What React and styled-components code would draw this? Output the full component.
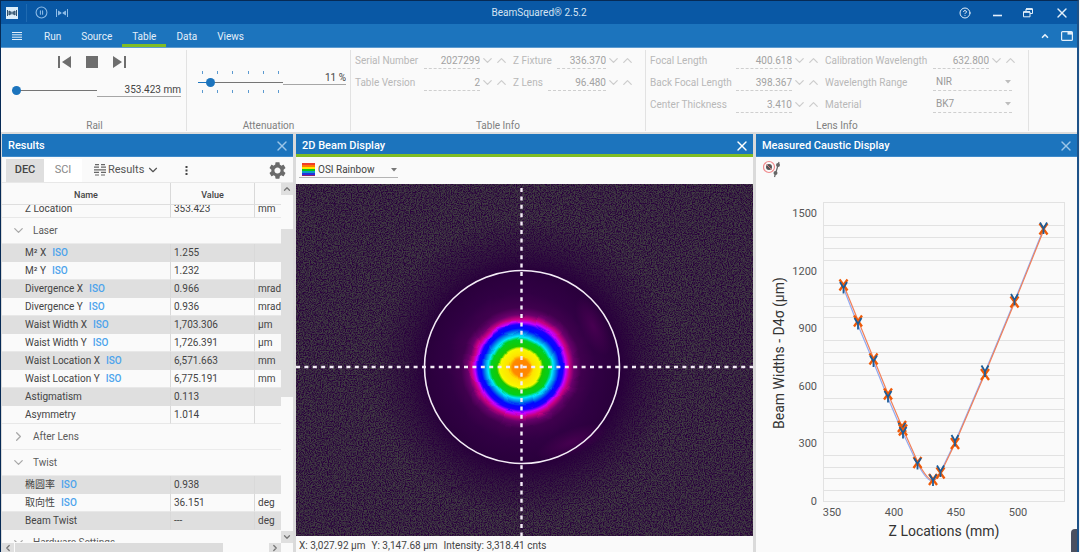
import React, { useEffect, useRef } from 'react'
import styled, { createGlobalStyle, css } from 'styled-components'
import { ChevronDown, ChevronLeft, ChevronRight, ChevronUp, CircleHelp, CirclePause, X } from 'lucide-react'

const GlobalStyle = createGlobalStyle`
* { box-sizing: border-box; }
body {
  margin: 0;
  background: #f4f4f4;
  color: #444;
  font-family: Roboto, "Noto Sans CJK SC", sans-serif;
  font-size: 10px;
  line-height: 14px;
}
button, input, select {
  margin: 0;
  padding: 0;
  border: 0;
  border-radius: 0;
  background: none;
  color: inherit;
  font: inherit;
  outline: none;
}
svg { display: block; flex: none; }
`

const tabs = ['Run', 'Source', 'Table', 'Data', 'Views']

const results = [
  { name: 'Z Location', value: '353.423', unit: 'mm' },
  { group: 'Laser', open: true },
  { name: 'M² X', iso: true, value: '1.255', shade: true },
  { name: 'M² Y', iso: true, value: '1.232' },
  { name: 'Divergence X', iso: true, value: '0.966', unit: 'mrad', shade: true },
  { name: 'Divergence Y', iso: true, value: '0.936', unit: 'mrad' },
  { name: 'Waist Width X', iso: true, value: '1,703.306', unit: 'µm', shade: true },
  { name: 'Waist Width Y', iso: true, value: '1,726.391', unit: 'µm' },
  { name: 'Waist Location X', iso: true, value: '6,571.663', unit: 'mm', shade: true },
  { name: 'Waist Location Y', iso: true, value: '6,775.191', unit: 'mm' },
  { name: 'Astigmatism', value: '0.113', shade: true },
  { name: 'Asymmetry', value: '1.014' },
  { group: 'After Lens', open: false },
  { group: 'Twist', open: true },
  { name: '椭圆率', iso: true, value: '0.938', shade: true },
  { name: '取向性', iso: true, value: '36.151', unit: 'deg' },
  { name: 'Beam Twist', value: '---', unit: 'deg', shade: true },
  { group: 'Hardware Settings', open: true },
]

function NumberField({ label, labelWidth, value }) {
  return (
    <Field>
      <FieldLabel $width={labelWidth}>
        <span>{label}</span>
        <NumberInput defaultValue={value} />
      </FieldLabel>
      <SpinButton aria-label={`Decrease ${label}`}><ChevronDown size={15} strokeWidth={2} /></SpinButton>
      <SpinButton aria-label={`Increase ${label}`}><ChevronUp size={15} strokeWidth={2} /></SpinButton>
    </Field>
  )
}

function SelectField({ label, labelWidth, value }) {
  return (
    <Field>
      <FieldLabel $width={labelWidth}>
        <span>{label}</span>
        <SelectBox $dotted>
          <select defaultValue={value}><option>{value}</option></select>
          <Caret />
        </SelectBox>
      </FieldLabel>
    </Field>
  )
}

function Caret() {
  return <svg width="6" height="4" viewBox="0 0 6 4"><path d="M0 0h6L3 3.5z" fill="currentColor" /></svg>
}

function TitleBar() {
  return (
    <Title>
      <TitleTools>
        <svg width="12" height="12" viewBox="0 0 12 12">
          <rect width="12" height="12" fill="#dceefa" />
          <path d="M1.5 3v6M10.5 3v6M3 4l2 1.2v1.6L3 8zM9 4L7 5.2v1.6L9 8zM6 4.5v3" stroke="#33536e" fill="#56748c" strokeWidth="1" />
        </svg>
        <Divider />
        <TitleButton aria-label="Pause"><CirclePause size={13} strokeWidth={2} /></TitleButton>
        <TitleButton aria-label="Beam">
          <svg width="12" height="10" viewBox="0 0 12 10">
            <path d="M.5 1v8M11.5 1v8M5.5 5h1" stroke="currentColor" />
            <path d="M2 2.5L5 4.2v1.6L2 7.5zM10 2.5L7 4.2v1.6l3 1.7z" fill="currentColor" />
          </svg>
        </TitleButton>
      </TitleTools>
      <h1>BeamSquared® 2.5.2</h1>
      <WindowButtons>
        <TitleButton $bright aria-label="Help"><CircleHelp size={12} strokeWidth={2} /></TitleButton>
        <TitleButton $bright aria-label="Minimize">
          <svg width="10" height="10" viewBox="0 0 10 10"><path d="M1 7.5h9" stroke="currentColor" strokeWidth="1.6" /></svg>
        </TitleButton>
        <TitleButton $bright aria-label="Restore">
          <svg width="10" height="10" viewBox="0 0 10 10" fill="none" stroke="currentColor">
            <path d="M3 3.5V1h6.5v4.5H7" /><path d="M3 1h6.5" strokeWidth="1.8" />
            <path d="M.5 3.8H7v5H.5z" /><path d="M.5 4H7" strokeWidth="1.6" />
          </svg>
        </TitleButton>
        <TitleButton $bright aria-label="Close"><X size={16} strokeWidth={2} /></TitleButton>
      </WindowButtons>
    </Title>
  )
}

function Ribbon() {
  return (
    <RibbonBar>
      <Group $width={184}>
        <RailBody>
          <Transport>
            <button aria-label="First">
              <svg width="13" height="12" viewBox="0 0 13 12" fill="#6e6e6e"><path d="M0 0h2v12H0zM13 0v12L4 6z" /></svg>
            </button>
            <button aria-label="Stop">
              <svg width="12" height="12" viewBox="0 0 12 12" fill="#6e6e6e"><path d="M0 0h12v12H0z" /></svg>
            </button>
            <button aria-label="Last">
              <svg width="13" height="12" viewBox="0 0 13 12" fill="#6e6e6e"><path d="M13 0h-2v12h2zM0 0v12l9-6z" /></svg>
            </button>
          </Transport>
          <SliderRow>
            <Slider type="range" aria-label="Rail position" min="0" max="100" defaultValue="0" $fill="0%" />
            <ValueInput aria-label="Rail value" defaultValue="353.423 mm" />
          </SliderRow>
        </RailBody>
        <GroupName>Rail</GroupName>
      </Group>
      <Group $width={164}>
        <AttenuationBody>
          <SliderRow $top>
            <TickedSlider>
              <Ticks>{[0, 1, 2, 3, 4, 5].map(i => <i key={i} />)}</Ticks>
              <Slider type="range" aria-label="Attenuation" min="0" max="100" defaultValue="11" $fill="14%" />
              <Ticks>{[0, 1, 2, 3, 4, 5].map(i => <i key={i} />)}</Ticks>
            </TickedSlider>
            <ValueInput aria-label="Attenuation value" defaultValue="11 %" />
          </SliderRow>
        </AttenuationBody>
        <GroupName>Attenuation</GroupName>
      </Group>
      <Group $width={295}>
        <Fields>
          <FieldColumn $width={153}>
            <NumberField label="Serial Number" labelWidth={69} value="2027299" />
            <NumberField label="Table Version" labelWidth={69} value="2" />
          </FieldColumn>
          <FieldColumn $width={121}>
            <NumberField label="Z Fixture" value="336.370" />
            <NumberField label="Z Lens" value="96.480" />
          </FieldColumn>
        </Fields>
        <GroupName>Table Info</GroupName>
      </Group>
      <Group $width={383}>
        <Fields>
          <FieldColumn $width={170}>
            <NumberField label="Focal Length" labelWidth={86} value="400.618" />
            <NumberField label="Back Focal Length" labelWidth={86} value="398.367" />
            <NumberField label="Center Thickness" labelWidth={86} value="3.410" />
          </FieldColumn>
          <FieldColumn $width={192}>
            <NumberField label="Calibration Wavelength" labelWidth={108} value="632.800" />
            <SelectField label="Wavelength Range" labelWidth={108} value="NIR" />
            <SelectField label="Material" labelWidth={108} value="BK7" />
          </FieldColumn>
        </Fields>
        <GroupName>Lens Info</GroupName>
      </Group>
    </RibbonBar>
  )
}

function ResultsPanel() {
  const scroller = useRef(null)
  useEffect(() => {
    scroller.current.scrollTop = 5
  }, [])

  return (
    <Panel $width={291}>
      <PanelHeader>
        <h2>Results</h2>
        <CloseButton aria-label="Close Results"><X size={16} strokeWidth={2} /></CloseButton>
      </PanelHeader>
      <ResultsTools>
        <FormatButton $active>DEC</FormatButton>
        <FormatButton>SCI</FormatButton>
        <ResultsMenu>
          <svg width="12" height="12" viewBox="0 0 12 12" stroke="#666" strokeWidth="1.2">
            <path d="M1 .6h4M7 .6h4M0 3.2h5M7 3.2h5M0 5.8h12M0 8.4h5M7 8.4h5M1 11h4M7 11h4" />
          </svg>
          Results
          <ChevronDown size={14} strokeWidth={2} />
        </ResultsMenu>
        <MoreButton aria-label="More">
          <svg width="3" height="9" viewBox="0 0 3 9" fill="#444"><path d="M.5 0h2v2h-2zM.5 3.5h2v2h-2zM.5 7h2v2h-2z" /></svg>
        </MoreButton>
        <GearButton aria-label="Settings">
          <svg width="20" height="20" viewBox="2 2 20 20" fill="#6b6b6b">
            <path d="M19.14 12.94c.04-.3.06-.61.06-.94 0-.32-.02-.64-.07-.94l2.03-1.58c.18-.14.23-.41.12-.61l-1.92-3.32c-.12-.22-.37-.29-.59-.22l-2.39.96c-.5-.38-1.03-.7-1.62-.94l-.36-2.54c-.04-.24-.24-.41-.48-.41h-3.84c-.24 0-.43.17-.47.41l-.36 2.54c-.59.24-1.13.57-1.62.94l-2.39-.96c-.22-.08-.47 0-.59.22L2.74 8.87c-.12.21-.08.47.12.61l2.03 1.58c-.05.3-.09.63-.09.94s.02.64.07.94l-2.03 1.58c-.18.14-.23.41-.12.61l1.92 3.32c.12.22.37.29.59.22l2.39-.96c.5.38 1.03.7 1.62.94l.36 2.54c.05.24.24.41.48.41h3.84c.24 0 .44-.17.47-.41l.36-2.54c.59-.24 1.13-.56 1.62-.94l2.39.96c.22.08.47 0 .59-.22l1.92-3.32c.12-.22.07-.47-.12-.61l-2.01-1.58zM12 15.6c-1.98 0-3.6-1.62-3.6-3.6s1.62-3.6 3.6-3.6 3.6 1.62 3.6 3.6-1.62 3.6-3.6 3.6z" />
          </svg>
        </GearButton>
      </ResultsTools>
      <ResultsBody>
        <Scroller ref={scroller}>
          <ResultsTable>
            <colgroup><col width="169" /><col width="84" /><col width="50" /></colgroup>
            <thead><tr><th>Name</th><th>Value</th><th aria-label="Unit" /></tr></thead>
            <tbody>
              {results.map(row => row.group ? (
                <GroupRow key={row.group}>
                  <td colSpan={3}>
                    <GroupToggle>
                      {row.open ? <ChevronDown size={15} /> : <ChevronRight size={15} />}
                      {row.group}
                    </GroupToggle>
                  </td>
                </GroupRow>
              ) : (
                <DataRow key={row.name} $shade={row.shade}>
                  <td>{row.name}{row.iso && <Iso>ISO</Iso>}</td>
                  <td>{row.value}</td>
                  <td>{row.unit}</td>
                </DataRow>
              ))}
            </tbody>
          </ResultsTable>
        </Scroller>
        <VerticalBar>
          <ScrollButton aria-label="Scroll up"><ChevronUp size={10} strokeWidth={3} /></ScrollButton>
          <VerticalTrack><VerticalThumb /></VerticalTrack>
          <ScrollButton aria-label="Scroll down"><ChevronDown size={10} strokeWidth={3} /></ScrollButton>
        </VerticalBar>
        <HorizontalBar>
          <ScrollButton aria-label="Scroll left"><ChevronLeft size={10} strokeWidth={3} /></ScrollButton>
          <HorizontalTrack><HorizontalThumb /></HorizontalTrack>
          <ScrollButton aria-label="Scroll right"><ChevronRight size={10} strokeWidth={3} /></ScrollButton>
        </HorizontalBar>
      </ResultsBody>
    </Panel>
  )
}

function BeamImage() {
  return (
    <BeamSvg viewBox="0 0 457 352" preserveAspectRatio="xMidYMid slice" role="img" aria-label="Beam profile">
      <defs>
        <filter id="noise" x="0" y="0" width="100%" height="100%" colorInterpolationFilters="sRGB">
          <feTurbulence type="fractalNoise" baseFrequency="0.83" numOctaves="3" seed="4" />
          <feColorMatrix values="0 0 0 0 0.25  0 0 0 0 0.23  0 0 0 0 0.26  3 0 0 0 -0.9" />
        </filter>
        <filter id="wobble" x="-20%" y="-20%" width="140%" height="140%" colorInterpolationFilters="sRGB">
          <feTurbulence type="fractalNoise" baseFrequency="0.04" numOctaves="2" seed="8" />
          <feDisplacementMap in="SourceGraphic" scale="5" xChannelSelector="R" yChannelSelector="G" />
        </filter>
        <radialGradient id="fade" gradientUnits="userSpaceOnUse" cx="228" cy="184" r="150">
          <stop offset="0.65" stopColor="#000" />
          <stop offset="0.78" stopColor="#777" />
          <stop offset="1" stopColor="#fff" />
        </radialGradient>
        <mask id="outside"><rect width="457" height="352" fill="url(#fade)" /></mask>
        <radialGradient id="beam" gradientUnits="userSpaceOnUse" cx="226" cy="183" fx="224" fy="184" r="100">
          <stop offset="0" stopColor="#ff7f00" />
          <stop offset="0.09" stopColor="#ff8a00" />
          <stop offset="0.125" stopColor="#ffe000" />
          <stop offset="0.2" stopColor="#f8fa00" />
          <stop offset="0.225" stopColor="#18c800" />
          <stop offset="0.285" stopColor="#00cf20" />
          <stop offset="0.315" stopColor="#00e8ff" />
          <stop offset="0.35" stopColor="#0080e8" />
          <stop offset="0.385" stopColor="#0008ff" />
          <stop offset="0.42" stopColor="#1800ff" />
          <stop offset="0.45" stopColor="#c800ff" />
          <stop offset="0.485" stopColor="#c80084" />
          <stop offset="0.53" stopColor="#6a006c" />
          <stop offset="0.6" stopColor="#40004e" />
          <stop offset="0.74" stopColor="#310044" />
          <stop offset="1" stopColor="#28003a" />
        </radialGradient>
        <radialGradient id="haze">
          <stop offset="0" stopColor="#520058" stopOpacity="0.7" />
          <stop offset="1" stopColor="#520058" stopOpacity="0" />
        </radialGradient>
      </defs>
      <rect width="457" height="352" fill="#29003c" />
      <circle cx="226" cy="183" r="100" fill="url(#beam)" filter="url(#wobble)" />
      <ellipse cx="276" cy="258" rx="38" ry="13" fill="url(#haze)" transform="rotate(-22 276 258)" />
      <ellipse cx="297" cy="142" rx="13" ry="32" fill="url(#haze)" transform="rotate(-25 297 142)" />
      <g mask="url(#outside)"><rect width="457" height="352" filter="url(#noise)" /></g>
      <g fill="none" stroke="#f4ecf7">
        <ellipse cx="226" cy="183" rx="97.5" ry="96.5" strokeWidth="1.6" />
        <path d="M225.5 4v348" strokeDasharray="4 4.4" strokeWidth="2.4" />
        <path d="M0 183h457" strokeDasharray="4 4.4" strokeWidth="2.4" />
      </g>
    </BeamSvg>
  )
}

function BeamPanel() {
  return (
    <Panel>
      <PanelHeader $active>
        <h2>2D Beam Display</h2>
        <CloseButton $bright aria-label="Close 2D Beam Display"><X size={16} strokeWidth={2} /></CloseButton>
      </PanelHeader>
      <BeamTools>
        <SelectBox>
          <svg width="13" height="13" viewBox="0 0 13 13" shapeRendering="crispEdges">
            {['#f03c28', '#ff7a00', '#ffe600', '#0cc814', '#0a9fc8', '#2430e0', '#8c1e6e'].map((c, i) => (
              <rect key={c} y={i * 2} width="13" height="2" fill={c} />
            ))}
          </svg>
          <select aria-label="Palette" defaultValue="OSI Rainbow"><option>OSI Rainbow</option></select>
          <Caret />
        </SelectBox>
      </BeamTools>
      <BeamImage />
      <Status>
        <span>X: 3,027.92 µm</span>
        <span>Y: 3,147.68 µm</span>
        <span>Intensity: 3,318.41 cnts</span>
      </Status>
    </Panel>
  )
}

// centre of the X marker and of the Y marker at each z step
const points = [
  [88, 285, 287.5], [102.5, 321, 323.5], [118, 359, 361], [132.5, 394, 396.5],
  [146.5, 426.5, 428.5], [147.5, 430, 432.5], [162, 462.5, 463.5], [177.5, 479.5, 480],
  [185, 473, 471], [199.5, 443.5, 440.5], [229.5, 374.5, 371], [259, 302, 299.5], [288, 229, 228],
]

function CausticChart() {
  const minor = []
  for (let v = 0; v <= 1500; v += 60) {
    if (v % 300) minor.push(501.5 - v * 0.192)
  }
  return (
    <ChartSvg viewBox="756 184 321 367" preserveAspectRatio="xMinYMin meet" role="img" aria-label="Beam widths by Z location">
      <g stroke="#e2e2e2">
        <rect x="823.5" y="202.5" width="241" height="299" fill="none" />
        {minor.map(y => <path key={y} d={`M824 ${Math.round(y) + 0.5}h241`} />)}
      </g>
      <g fill="#555" fontSize="11">
        {[0, 300, 600, 900, 1200, 1500].map(v => (
          <text key={v} x="817" y={505 - v * 0.192} textAnchor="end">{v}</text>
        ))}
        {[350, 400, 450, 500].map(v => (
          <text key={v} x={832 + (v - 350) * 1.24} y="516" textAnchor="middle">{v}</text>
        ))}
      </g>
      <g fill="#333" fontSize="14" textAnchor="middle">
        <text x="944" y="536">Z Locations (mm)</text>
        <text transform="translate(784 353) rotate(-90)">Beam Widths - D4σ (µm)</text>
      </g>
      <g transform="translate(755.5 0)" fill="none" strokeWidth="1.2">
        <path stroke="#93aaf0" d="M88 288L102 324L117.5 361L132 397L146.5 431L162 464Q172 482 177.5 481Q181 479 185 472L199.5 442L229.5 372L259 301L288 229" />
        <path stroke="#f0805a" d="M88.5 286L103 321.5L118.5 359.5L133 395L147.5 429L162.5 462.5Q172.5 481 178 480.5Q181.5 479 185.5 472.5L200 442.5L230 372.5L259.5 301.5L288.5 229.5" />
        {points.map(([x, yx, yy]) => (
          <React.Fragment key={x}>
            <path stroke="#ee5a08" strokeWidth="2.3" d={`M${x - 4} ${yx - 5.5}l8 11M${x + 4} ${yx - 5.5}l-8 11`} />
            <path stroke="#1d5c96" strokeWidth="1.8" d={`M${x - 3.5} ${yy - 5.5}l3.5 6l3.5-6M${x} ${yy}v6`} />
          </React.Fragment>
        ))}
      </g>
    </ChartSvg>
  )
}

function CausticPanel() {
  return (
    <Panel $width={321}>
      <PanelHeader>
        <h2>Measured Caustic Display</h2>
        <CloseButton aria-label="Close Measured Caustic Display"><X size={16} strokeWidth={2} /></CloseButton>
      </PanelHeader>
      <CausticTools>
        <button aria-label="Exclude point">
          <svg width="18" height="18" viewBox="0 0 18 18">
            <circle cx="6" cy="7" r="3" fill="#555" />
            <circle cx="6" cy="7" r="5.5" fill="none" stroke="#f0898c" strokeWidth="1.2" />
            <path d="M2.2 3.2l7.6 7.6" stroke="#f0898c" strokeWidth="0.8" />
            <path d="M16 2l-4.5 15" stroke="#666" strokeWidth="1.2" />
            <circle cx="15" cy="5" r="2" fill="#666" /><circle cx="12.5" cy="13" r="2" fill="#666" />
          </svg>
        </button>
      </CausticTools>
      <CausticChart />
      <Corner />
    </Panel>
  )
}

export default function App() {
  return (
    <Window>
      <GlobalStyle />
      <TitleBar />
      <Nav>
        <MenuButton aria-label="Menu">
          <svg width="10" height="8" viewBox="0 0 10 8" stroke="currentColor"><path d="M0 .5h10M0 2.8h10M0 5.2h10M0 7.5h10" /></svg>
        </MenuButton>
        {tabs.map(t => <Tab key={t} href="#" $active={t === 'Table'}>{t}</Tab>)}
        <NavTools>
          <button aria-label="Collapse ribbon"><ChevronUp size={10} strokeWidth={4} /></button>
          <button aria-label="Layout">
            <svg width="12" height="10" viewBox="0 0 12 10" fill="none" stroke="#e3effa">
              <rect x=".6" y=".6" width="10.8" height="8.8" rx="1" strokeWidth="1.2" /><path d="M6.5 2.3H11" strokeWidth="2.6" />
            </svg>
          </button>
        </NavTools>
      </Nav>
      <Ribbon />
      <Panels>
        <ResultsPanel />
        <BeamPanel />
        <CausticPanel />
      </Panels>
    </Window>
  )
}

const Window = styled.div`
min-height: 100vh;
display: flex;
flex-direction: column;
margin-right: 1px;
border-top: 1px solid #062a55;
border-left: 1px solid #062a55;
border-right: 2px solid #1d5288;
background: #fafafa;
`;
const Title = styled.header`
height: 23px;
display: grid;
grid-template-columns: 1fr auto 1fr;
align-items: center;
background: #0958a5;
h1{
   margin: 0;
   color: #d5e4f3;
   font-size: 10px;
   font-weight: 400;
}
`;
const TitleTools = styled.div`
display: flex;
align-items: center;
gap: 8px;
padding-left: 5px;
`;
const Divider = styled.i`
width: 1px;
height: 18px;
background: #1f6ab1;
`;
const TitleButton = styled.button`
display: flex;
color: ${p => p.$bright ? '#e3effa' : '#8dbbe6'};
`;
const WindowButtons = styled.div`
display: flex;
align-items: center;
justify-content: flex-end;
gap: 21px;
padding-right: 7px;
`;
const Nav = styled.nav`
height: 24px;
display: flex;
align-items: stretch;
background: #1c74bd;
border-bottom: 1px solid #5d9bd0;
button{
   display: flex;
   align-items: center;
   color: #e3effa;
}
`;
const MenuButton = styled.button`
margin: 0 12px 0 11px;
`;
const Tab = styled.a`
display: flex;
align-items: center;
padding: 5px 10px 0;
border-bottom: 3px solid ${p => p.$active ? '#80bc24' : 'transparent'};
color: #e3effa;
text-decoration: none;
`;
const NavTools = styled.div`
display: flex;
gap: 11px;
margin-left: auto;
padding-right: 4px;
`;
const RibbonBar = styled.section`
height: 86px;
display: flex;
padding: 2px 0 1px 2px;
border-bottom: 2px solid #dcdcdc;
`;
const Group = styled.div`
width: ${p => p.$width}px;
display: flex;
flex-direction: column;
justify-content: space-between;
border-right: 1px solid #e2e2e2;
`;
const GroupName = styled.div`
height: 12px;
line-height: 14px;
text-align: center;
color: #808080;
`;
const RailBody = styled.div`
display: flex;
flex-direction: column;
gap: 15px;
padding: 6px 5px 0 9px;
`;
const Transport = styled.div`
display: flex;
gap: 15px;
padding-left: 46px;
button{ display: flex; }
`;
const AttenuationBody = styled.div`
padding: 21px 4px 0 11px;
`;
const SliderRow = styled.div`
display: flex;
align-items: ${p => p.$top ? 'flex-start' : 'center'};
`;
const thumb = css`
-webkit-appearance: none;
width: 9px;
height: 9px;
border-radius: 50%;
background: #1c74bd;
`;
const Slider = styled.input`
appearance: none;
width: 85px;
height: 10px;
background: linear-gradient(to right, #1c74bd ${p => p.$fill}, #757575 ${p => p.$fill}) center / 100% 1px no-repeat;
&::-webkit-slider-thumb{ ${thumb} }
`;
const TickedSlider = styled.div`
display: flex;
flex-direction: column;
gap: 3px;
`;
const Ticks = styled.div`
display: flex;
justify-content: space-between;
padding: 0 4px;
i{
   width: 1px;
   height: 3px;
   background: #5b9ad0;
}
`;
const ValueInput = styled.input`
flex: 1;
min-width: 0;
height: 14px;
border-bottom: 1px solid #a6a6a6;
text-align: right;
`;
const Fields = styled.div`
display: flex;
gap: 5px;
padding-left: 4px;
`;
const FieldColumn = styled.div`
width: ${p => p.$width}px;
display: flex;
flex-direction: column;
padding-top: 2px;
gap: 5px;
`;
const Field = styled.div`
height: 17px;
display: flex;
align-items: center;
color: #b8b8b8;
`;
const FieldLabel = styled.label`
flex: 1;
min-width: 0;
display: flex;
align-items: center;
gap: ${p => p.$width ? 0 : 5}px;
white-space: nowrap;
span{
   flex: none;
   width: ${p => p.$width ? `${p.$width}px` : 'auto'};
}
`;
const NumberInput = styled.input`
flex: 1;
width: 57px;
min-width: 0;
height: 16px;
border-bottom: 1px dashed #cfcfcf;
color: #a2a2a2;
text-align: right;
`;
const SpinButton = styled.button`
width: 14px;
display: flex;
justify-content: center;
color: #cdcdcd;
`;
const SelectBox = styled.div`
width: ${p => p.$dotted ? 79 : 99}px;
height: 16px;
display: flex;
align-items: center;
gap: 3px;
padding: 0 1px 0 3px;
border-bottom: 1px ${p => p.$dotted ? 'dashed #cfcfcf' : 'solid #b4b4b4'};
color: ${p => p.$dotted ? '#bdbdbd' : '#777'};
select{
   appearance: none;
   flex: 1;
   min-width: 0;
   color: ${p => p.$dotted ? '#999' : '#444'};
}
`;
const Panels = styled.main`
flex: 1;
display: flex;
gap: 3px;
padding-left: 1px;
background: #dadada;
`;
const Panel = styled.section`
position: relative;
flex: ${p => p.$width ? 'none' : 1};
width: ${p => p.$width ? `${p.$width}px` : 'auto'};
min-width: 0;
display: flex;
flex-direction: column;
background: #fafafa;
`;
const PanelHeader = styled.header`
height: 23px;
display: flex;
align-items: center;
justify-content: space-between;
padding: 0 3px 0 6px;
background: #1c74bd;
box-shadow: inset 0 ${p => p.$active ? '-3px #80bc24' : '-1px #3e8aca'};
h2{
   margin: 0;
   color: #fff;
   font-size: 11px;
   font-weight: 500;
}
`;
const CloseButton = styled.button`
display: flex;
color: ${p => p.$bright ? '#fff' : '#9cc5e8'};
`;
const ResultsTools = styled.div`
height: 26px;
display: flex;
align-items: center;
padding: 1px 7px 0 4px;
border-bottom: 1px solid #e8e8e8;
font-size: 11px;
button{
   display: flex;
   align-items: center;
}
`;
const FormatButton = styled.button`
width: 38px;
height: 23px;
justify-content: center;
background: ${p => p.$active ? '#dfdfdf' : '#fff'};
color: ${p => p.$active ? '#444' : '#888'};
font-weight: ${p => p.$active ? 500 : 400};
`;
const ResultsMenu = styled.button`
gap: 2px;
margin-left: 12px;
color: #555;
`;
const MoreButton = styled.button`
margin-left: 25px;
`;
const GearButton = styled.button`
margin-left: auto;
svg{
   width: 17px;
   height: 17px;
}
`;
const ResultsBody = styled.div`
flex: 1;
display: grid;
grid-template-columns: minmax(0, 1fr) 12px;
grid-template-rows: minmax(0, 1fr) 10px;
`;
const Scroller = styled.div`
height: calc(100vh - 193px);
min-height: 200px;
overflow: hidden;
`;
const ResultsTable = styled.table`
table-layout: fixed;
width: 303px;
border-spacing: 0;
td, th{
   padding: 0;
   border-right: 1px solid #d9d9d9;
   white-space: nowrap;
}
th{
   position: sticky;
   top: 0;
   height: 22px;
   padding-top: 2px;
   background: #fafafa;
   border-bottom: 1px solid #dedede;
   font-size: 9px;
   font-weight: 500;
   line-height: 12px;
}
`;
const DataRow = styled.tr`
height: 18px;
background: ${p => p.$shade ? '#dfdfdf' : '#fafafa'};
td{
   height: 18px;
   padding-left: 3px;
   border-bottom: 1px solid ${p => p.$shade ? '#dfdfdf' : '#e8e8e8'};
}
td:first-child{ padding-left: 23px; }
`;
const GroupRow = styled.tr`
height: 26px;
td{
   border-right: 0;
   border-bottom: 1px solid #ebebeb;
}
`;
const GroupToggle = styled.button`
display: flex;
align-items: center;
gap: 7px;
padding-left: 9px;
color: #5a5a5a;
svg{ color: #a8a8a8; }
`;
const Iso = styled.span`
margin-left: 6px;
color: #4ba3ec;
font-weight: 500;
`;
const VerticalBar = styled.div`
display: flex;
flex-direction: column;
`;
const VerticalTrack = styled.div`
flex: 1;
padding-top: 34px;
`;
const VerticalThumb = styled.div`
height: 168px;
background: #dfdfdf;
`;
const ScrollButton = styled.button`
min-width: 12px;
height: 12px;
display: flex;
align-items: center;
justify-content: center;
background: #dfdfdf;
color: #777;
`;
const HorizontalBar = styled.div`
height: 10px;
display: flex;
overflow: hidden;
button{ height: 10px; }
`;
const HorizontalTrack = styled.div`
flex: 1;
`;
const HorizontalThumb = styled.div`
width: 82%;
height: 10px;
background: #dcdcdc;
border-left: 1px solid #fafafa;
`;
const BeamTools = styled.div`
height: 27px;
padding: 5px 3px;
`;
const BeamSvg = styled.svg`
flex: 1;
width: 100%;
min-height: 0;
height: 0;
`;
const Status = styled.footer`
height: 17px;
display: flex;
align-items: center;
gap: 6px;
padding: 2px 3px 0;
`;
const CausticTools = styled.div`
height: 27px;
padding: 3px 7px;
button{ display: flex; }
`;
const ChartSvg = styled.svg`
width: 100%;
font-family: Roboto, sans-serif;
`;
const Corner = styled.div`
position: absolute;
right: 0;
bottom: 0;
width: 6px;
height: 24px;
border-radius: 4px 0 0 0;
background: #4b5060;
`;
